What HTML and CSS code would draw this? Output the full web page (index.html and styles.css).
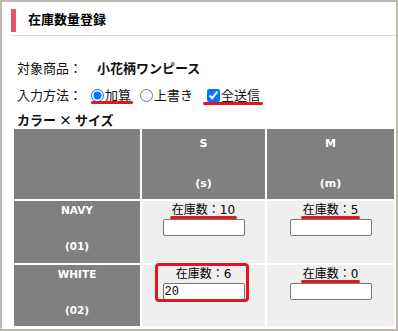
FILE: index.html
```html
<!DOCTYPE html>
<html lang="ja">
<head>
    <meta charset="UTF-8">
    <meta name="viewport" content="width=device-width, initial-scale=1.0">
    <title>在庫数量登録</title>
    <link rel="stylesheet" href="styles.css">
</head>
<body>

<div class="frame">

<div class="heading">
    <span class="heading_bar"></span>
    <h1>在庫数量登録</h1>
</div>

<div class="form_area">
    <div class="row row_first">
        <span class="row_label">対象商品：</span>
        <b>小花柄ワンピース</b>
    </div>
    <div class="row">
        <span class="row_label row_label_short">入力方法：</span>
        <label class="opt mark mark_radio"><input type="radio" name="mode" checked>加算</label>
        <label class="opt opt_second"><input type="radio" name="mode">上書き</label>
        <label class="opt opt_check mark mark_check"><input type="checkbox" checked>全送信</label>
    </div>
    <div class="matrix_title">カラー × サイズ</div>
</div>

<table class="matrix">
    <colgroup>
        <col class="c_label"><col class="c_s"><col class="c_m"><col class="c_l">
    </colgroup>
    <tr class="head_row">
        <th></th>
        <th>S<br><br>(s)</th>
        <th>M<br><br>(m)</th>
        <th></th>
    </tr>
    <tr class="row_navy">
        <th class="color_label">NAVY<br><br>(01)</th>
        <td><span class="stock mark">在庫数：10</span><input type="text" class="qty"></td>
        <td><span class="stock mark">在庫数：5</span><input type="text" class="qty"></td>
        <td></td>
    </tr>
    <tr class="row_white">
        <th class="color_label">WHITE<br><br>(02)</th>
        <td>
            <div class="cell">
                <span class="stock">在庫数：6</span><input type="text" class="qty" value="20">
                <span class="callout"></span>
            </div>
        </td>
        <td><span class="stock mark">在庫数：0</span><input type="text" class="qty"></td>
        <td></td>
    </tr>
</table>

</div>

</body>
</html>
```

FILE: styles.css
```css
body {
  margin: 0;
  font-family: "Noto Sans CJK JP", sans-serif;
  color: #111;
}

/* outer window frame */
.frame {
  width: 398px;
  height: 331px;
  box-sizing: border-box;
  border: 2px solid #bdbab2;
  background: #fff;
  overflow: hidden;
}

.heading {
  display: flex;
  align-items: flex-start;
  margin-left: 9px;
  padding: 7px 0 3px 0;
  border-bottom: 1px solid #dcdcdc;
}

.heading_bar {
  width: 5px;
  height: 23px;
  background: #e9546b;
}

.heading h1 {
  margin: 0 0 0 12px;
  font-size: 13px;
  line-height: 19px;
  font-weight: bold;
  color: #000;
}

.form_area {
  padding-left: 15px;
  font-size: 13px;
}

.row {
  display: flex;
  align-items: center;
  height: 20px;
  margin-top: 7px;
  line-height: 20px;
}
.row_first { margin-top: 22px; }

.row_label {
  width: 80px;
  flex: none;
}
.row_label_short { width: 74px; }

.opt {
  display: flex;
  align-items: center;
  height: 20px;
}
.opt input {
  width: 13px;
  height: 13px;
  margin: 0 1px 0 0;
}
.opt_second { margin-left: 9px; }
.opt_check { margin-left: 14px; }

/* red underline annotations */
.mark { position: relative; }
.mark::after {
  content: "";
  position: absolute;
  left: -2px;
  right: -2px;
  bottom: 0;
  height: 3px;
  border-radius: 2px;
  background: #e3161d;
}
.mark_radio::after { left: 0; bottom: 1px; }
.mark_check::after { left: -4px; right: -3px; bottom: 0; }

.matrix_title {
  margin-top: 6px;
  line-height: 18px;
  font-weight: bold;
}

.matrix {
  table-layout: fixed;
  width: 512px;
  border-spacing: 2px;
  margin: -2px 0 0 10px;
  font-family: "DejaVu Sans", "Noto Sans CJK JP", sans-serif;
}
.c_label { width: 126px; }
.c_s { width: 123px; }
.c_m { width: 127px; }
.c_l { width: 126px; }

.matrix th {
  padding: 0;
  background: #808080;
  color: #fff;
  font-size: 10.5px;
  font-weight: bold;
}

.head_row th {
  height: 70px;
  line-height: 20px;
  vertical-align: middle;
  font-size: 11px;
}

.color_label {
  line-height: 18px;
  vertical-align: top;
}
.row_navy th, .row_navy td { height: 62px; }
.row_white th, .row_white td { height: 61px; }

.matrix td {
  padding: 0;
  background: #efefef;
  text-align: center;
  vertical-align: top;
  font-size: 12px;
  line-height: 18px;
  color: #000;
}

.stock { display: inline-block; }

.qty {
  display: block;
  box-sizing: border-box;
  width: 82px;
  height: 17px;
  margin: 0 auto;
  padding: 0 1px;
  border: 1px solid #767676;
  border-radius: 2px;
  background: #fff;
  font-family: "Liberation Mono", monospace;
  font-size: 12px;
  color: #000;
}

.cell { position: relative; }

/* red box around the edited cell */
.callout {
  position: absolute;
  left: 13px;
  top: -2px;
  width: 94px;
  height: 39px;
  box-sizing: border-box;
  border: 3px solid #e3161d;
  border-radius: 4px;
}
```
